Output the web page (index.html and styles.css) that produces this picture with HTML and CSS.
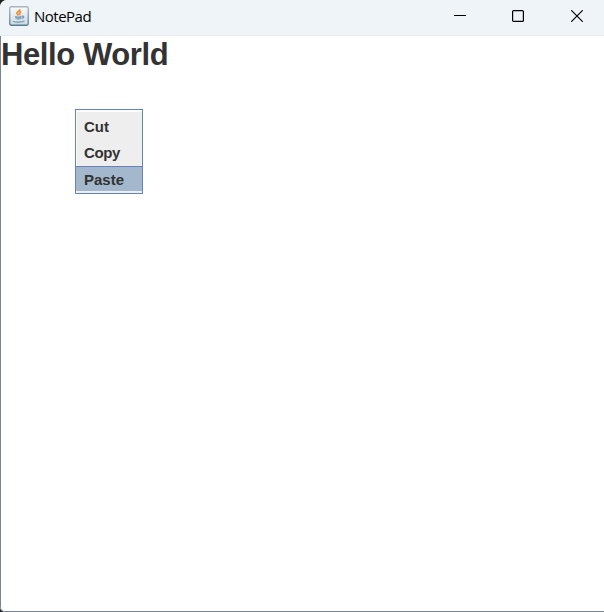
FILE: index.html
```html
<!DOCTYPE html>
<html lang="en">
<head>
<meta charset="utf-8">
<title>NotePad</title>
<link rel="stylesheet" href="styles.css">
</head>
<body>
<div class="window">
  <header class="titlebar">
    <svg class="app-icon" width="20" height="20" viewBox="0 0 20 20" fill="none">
      <defs><linearGradient id="g" x1="0" y1="0" x2="0" y2="1"><stop offset="0" stop-color="#fafafa"/><stop offset="1" stop-color="#ced8df"/></linearGradient>
      <linearGradient id="b" x1="0" y1="0" x2="0" y2="1"><stop offset="0" stop-color="#a9b6c0"/><stop offset="1" stop-color="#567b97"/></linearGradient></defs>
      <rect x=".75" y=".75" width="18.5" height="18.5" rx="1.5" fill="url(#g)" stroke="url(#b)" stroke-width="1.3"/>
      <path d="M10.700 3.200c.6 2-3.300 2.500-2.700 4.300.3.800 1.100 1.200 1.300 1.900M12.200 5.500c-2.700 1.300-1.500 2.200-1.600 3.700" stroke="#ed9140" stroke-width="1.900"/>
      <path d="M5.600 9.800c1.500.6 5.800.6 7.400 0l-.6 2.700c-.4 1.500-5.400 1.500-5.900 0z" fill="#85a9c4"/>
      <path d="M13 10.200c2.500-.7 2.400 1.700-.2 2.200M4 15.100c2 1.600 9.500 1.400 11.500-.3" stroke="#7099b8" stroke-width="1.200"/>
    </svg>
    <h1 class="title">NotePad</h1>
    <div class="controls">
      <svg width="12" height="12" viewBox="0 0 12 12"><path d="M0 5.500h12" stroke="#000"/></svg>
      <svg width="12" height="12" viewBox="0 0 12 12"><rect x=".6" y=".6" width="10.800" height="10.800" rx="1" fill="none" stroke="#000" stroke-width="1.200"/></svg>
      <svg width="12" height="12" viewBox="0 0 12 12"><path d="M.3.300l11.400 11.400M11.700.300L.3 11.700" stroke="#000" stroke-width="1.200"/></svg>
    </div>
  </header>
  <main class="editor">
    <div class="text">Hello World</div>
    <div class="menu">
      <div class="item">Cut</div>
      <div class="item copy">Copy</div>
      <div class="item selected">Paste</div>
    </div>
  </main>
</div>
</body>
</html>
```

FILE: styles.css
```css
* { box-sizing: border-box; }
body { margin: 0; background: #222; overflow: hidden; }
.window {
  display: flex;
  flex-direction: column;
  height: 612px;
  border-radius: 7px 0 0 5px;
  overflow: hidden;
  background: #fff;
}
.titlebar {
  display: flex;
  align-items: flex-start;
  flex: 0 0 36px;
  padding: 6px 21px 0 9px;
  background: #eef4f7;
  border-bottom: 1px solid #e9eced;
}
.app-icon { display: block; }
.title {
  margin: 0 0 0 5px;
  font: 400 15px/21px "Open Sans", "Noto Sans", sans-serif;
  letter-spacing: -0.5px;
  color: #000;
}
.controls {
  display: flex;
  margin: 4px 0 0 auto;
}
.controls svg { display: block; }
.controls svg + svg { margin-left: 46px; }
.controls svg:last-child { margin-left: 47px; }
.editor {
  position: relative;
  flex: 1;
  border-left: 1px solid #74859a;
  border-bottom: 1px solid #74859a;
  border-radius: 0 0 0 5px;
  color: #333;
  font-family: "Liberation Sans", Arial, sans-serif;
  font-weight: 700;
}
.text {
  padding-top: 1px;
  font-size: 31px;
  line-height: 36px;
  letter-spacing: -0.4px;
  white-space: nowrap;
}
.menu {
  position: absolute;
  left: 74px;
  top: 73px;
  width: 68px;
  height: 85px;
  padding: 2px 0;
  border: 1px solid #6382bf;
  background: linear-gradient(#eee, #eee) 1px 2px / 65px 81px no-repeat #fff;
  font-size: 15px;
}
.item { height: 27px; padding-left: 8px; line-height: 30px; }
.copy { line-height: 28px; letter-spacing: -0.4px; }
.selected {
  height: 25px;
  line-height: 26px;
  border-top: 1px solid #6382bf;
  background: #a3b8cc;
}
```
